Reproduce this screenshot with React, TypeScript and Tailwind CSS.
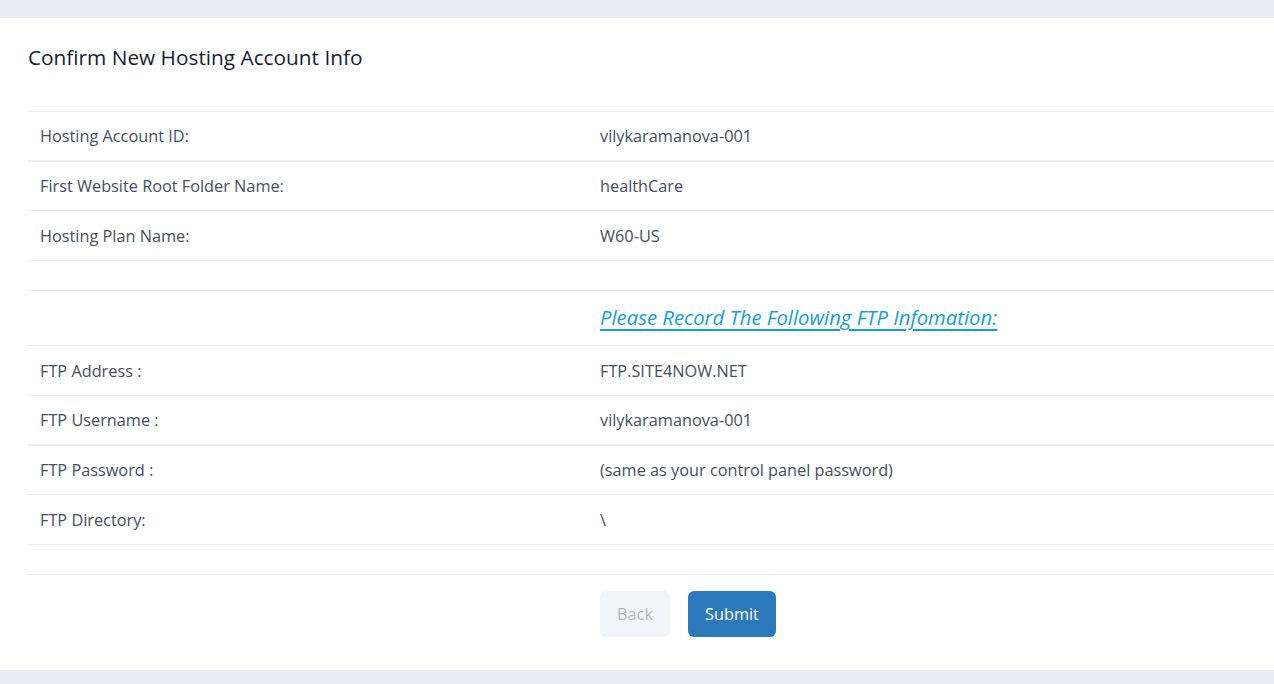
import React from 'react';

type Row = { label: string; value: string; h: string; thick?: boolean };

const accountRows: Row[] = [
  { label: 'Hosting Account ID:', value: 'vilykaramanova-001', h: 'h-[48px]' },
  { label: 'First Website Root Folder Name:', value: 'healthCare', h: 'h-[48px]', thick: true },
  { label: 'Hosting Plan Name:', value: 'W60-US', h: 'h-[49px]' },
];

const ftpRows: Row[] = [
  { label: 'FTP Address :', value: 'FTP.SITE4NOW.NET', h: 'h-[49px]' },
  { label: 'FTP Username :', value: 'vilykaramanova-001', h: 'h-[48px]' },
  { label: 'FTP Password :', value: '(same as your control panel password)', h: 'h-[48px]', thick: true },
  { label: 'FTP Directory:', value: '\\', h: 'h-[49px]' },
];

const InfoRow: React.FC<{ row: Row }> = ({ row }) => (
  <div
    className={`grid grid-cols-[560px_1fr] items-center border-[#ebedf3] ${row.thick ? 'border-t-2' : 'border-t'} ${row.h} box-content`}
  >
    <div className="px-3">{row.label}</div>
    <div className="px-3">{row.value}</div>
  </div>
);

const App: React.FC = () => {
  return (
    <div
      className="h-[684px] bg-[#eaebf4] pt-[18px] overflow-hidden"
      style={{ fontFamily: '"Open Sans", "Liberation Sans", sans-serif' }}
    >
      <div className="h-[652px] bg-white pl-[28px] pt-[26px]">
        <h2 className="text-[20.8px] leading-[26px] text-[#181c32] mb-[41px]">Confirm New Hosting Account Info</h2>

        <div className="text-[16.3px] leading-[22px] text-[#464e5f]">
          {accountRows.map((r) => (
            <InfoRow key={r.label} row={r} />
          ))}

          {/* spacer row */}
          <div className="border-t border-[#ebedf3] h-[29px] box-content" />

          <div className="grid grid-cols-[560px_1fr] items-center border-t border-[#ebedf3] h-[54px] box-content">
            <div />
            <div className="px-3">
              <a
                href="#"
                className="text-[20.3px] italic underline decoration-2 underline-offset-[4px] text-[#129fd6]"
              >
                Please Record The Following FTP Infomation:
              </a>
            </div>
          </div>

          {ftpRows.map((r) => (
            <InfoRow key={r.label} row={r} />
          ))}

          <div className="border-t border-[#ebedf3] h-[29px] box-content" />
          <div className="border-t border-[#ebedf3]" />

          <div className="grid grid-cols-[560px_1fr] pt-[16px]">
            <div />
            <div className="px-3 flex gap-[18px]">
              <button className="h-[46px] w-[70px] rounded-md bg-[#f1f4f8] text-[16.3px] text-[#b5b5c3]">Back</button>
              <button className="h-[46px] w-[88px] rounded-md bg-[#2b79bd] text-[16.3px] text-white">Submit</button>
            </div>
          </div>
        </div>
      </div>
    </div>
  );
};

export default App;
